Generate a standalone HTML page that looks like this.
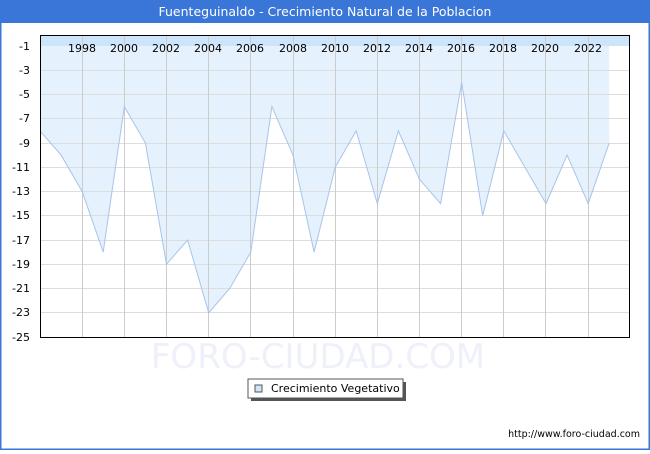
<!DOCTYPE html>
<html><head><style>
body{margin:0;width:650px;height:450px;overflow:hidden;background:#fff;font-family:"DejaVu Sans","Liberation Sans",sans-serif}
</style></head><body>
<svg width="650" height="450" xmlns="http://www.w3.org/2000/svg" font-family="DejaVu Sans, Liberation Sans, sans-serif">
<rect x="0" y="0" width="650" height="450" fill="#fff"/>
<rect x="0.5" y="0.5" width="649" height="449" fill="none" stroke="#3a75d8" stroke-width="2"/>
<rect x="0" y="0" width="650" height="23" fill="#3a75d8"/>
<text x="325" y="16" text-anchor="middle" font-size="12.5" fill="#fff">Fuenteguinaldo - Crecimiento Natural de la Poblacion</text>
<rect x="40" y="35" width="590" height="11" fill="#cce5fb"/>
<polygon fill="#e5f1fd" points="40,46 609.2,46 609.2,143 588.2,203.6 567.1,155.1 546,203.6 524.9,167.3 503.8,130.9 482.7,215.8 461.7,82.4 440.6,203.6 419.5,179.4 398.4,130.9 377.3,203.6 356.2,130.9 335.2,167.3 314.1,252.1 293,155.1 271.9,106.6 250.8,252.1 229.7,288.5 208.7,312.8 187.6,240 166.5,264.3 145.4,143 124.3,106.6 103.2,252.1 82.2,191.5 61.1,155.1 40,130.9"/>
<g stroke="#ddd" stroke-width="1">
<line x1="40" x2="630" y1="70.5" y2="70.5"/><line x1="40" x2="630" y1="94.5" y2="94.5"/><line x1="40" x2="630" y1="118.5" y2="118.5"/><line x1="40" x2="630" y1="143.5" y2="143.5"/><line x1="40" x2="630" y1="167.5" y2="167.5"/><line x1="40" x2="630" y1="191.5" y2="191.5"/><line x1="40" x2="630" y1="215.5" y2="215.5"/><line x1="40" x2="630" y1="240.5" y2="240.5"/><line x1="40" x2="630" y1="264.5" y2="264.5"/><line x1="40" x2="630" y1="288.5" y2="288.5"/><line x1="40" x2="630" y1="312.5" y2="312.5"/>
</g>
<g stroke="#ccc" stroke-width="1">
<line y1="35" y2="338" x1="82.5" x2="82.5"/><line y1="35" y2="338" x1="124.5" x2="124.5"/><line y1="35" y2="338" x1="166.5" x2="166.5"/><line y1="35" y2="338" x1="208.5" x2="208.5"/><line y1="35" y2="338" x1="250.5" x2="250.5"/><line y1="35" y2="338" x1="293.5" x2="293.5"/><line y1="35" y2="338" x1="335.5" x2="335.5"/><line y1="35" y2="338" x1="377.5" x2="377.5"/><line y1="35" y2="338" x1="419.5" x2="419.5"/><line y1="35" y2="338" x1="461.5" x2="461.5"/><line y1="35" y2="338" x1="503.5" x2="503.5"/><line y1="35" y2="338" x1="545.5" x2="545.5"/><line y1="35" y2="338" x1="588.5" x2="588.5"/>
</g>
<polyline fill="none" stroke="#a8c4ea" stroke-width="1" points="40,130.9 61.1,155.1 82.2,191.5 103.2,252.1 124.3,106.6 145.4,143 166.5,264.3 187.6,240 208.7,312.8 229.7,288.5 250.8,252.1 271.9,106.6 293,155.1 314.1,252.1 335.2,167.3 356.2,130.9 377.3,203.6 398.4,130.9 419.5,179.4 440.6,203.6 461.7,82.4 482.7,215.8 503.8,130.9 524.9,167.3 546,203.6 567.1,155.1 588.2,203.6 609.2,143"/>
<rect x="40.5" y="35.5" width="589" height="302" fill="none" stroke="#000" stroke-width="1"/>
<g font-size="11" fill="#000" text-anchor="end">
<text x="30" y="50">-1</text><text x="30" y="74">-3</text><text x="30" y="98">-5</text><text x="30" y="122">-7</text><text x="30" y="147">-9</text><text x="30" y="171">-11</text><text x="30" y="195">-13</text><text x="30" y="219">-15</text><text x="30" y="244">-17</text><text x="30" y="268">-19</text><text x="30" y="292">-21</text><text x="30" y="316">-23</text><text x="30" y="341">-25</text>
</g>
<g font-size="11" fill="#000" text-anchor="middle">
<text x="82" y="52">1998</text><text x="124" y="52">2000</text><text x="166" y="52">2002</text><text x="208" y="52">2004</text><text x="250" y="52">2006</text><text x="293" y="52">2008</text><text x="335" y="52">2010</text><text x="377" y="52">2012</text><text x="419" y="52">2014</text><text x="461" y="52">2016</text><text x="503" y="52">2018</text><text x="545" y="52">2020</text><text x="588" y="52">2022</text>
</g>
<text x="318" y="368" text-anchor="middle" font-size="34" fill="#eef0fa">FORO-CIUDAD.COM</text>
<rect x="251" y="382" width="155" height="19" fill="#555"/>
<rect x="248" y="379" width="155" height="19" fill="#fff" stroke="#555" stroke-width="1"/>
<rect x="255" y="385" width="7" height="7" fill="#cce5fb" stroke="#555" stroke-width="1"/>
<text x="271" y="392" font-size="11" fill="#000">Crecimiento Vegetativo</text>
<text x="640" y="437" text-anchor="end" font-size="9.5" fill="#000">http://www.foro-ciudad.com</text>
</svg>
</body></html>
